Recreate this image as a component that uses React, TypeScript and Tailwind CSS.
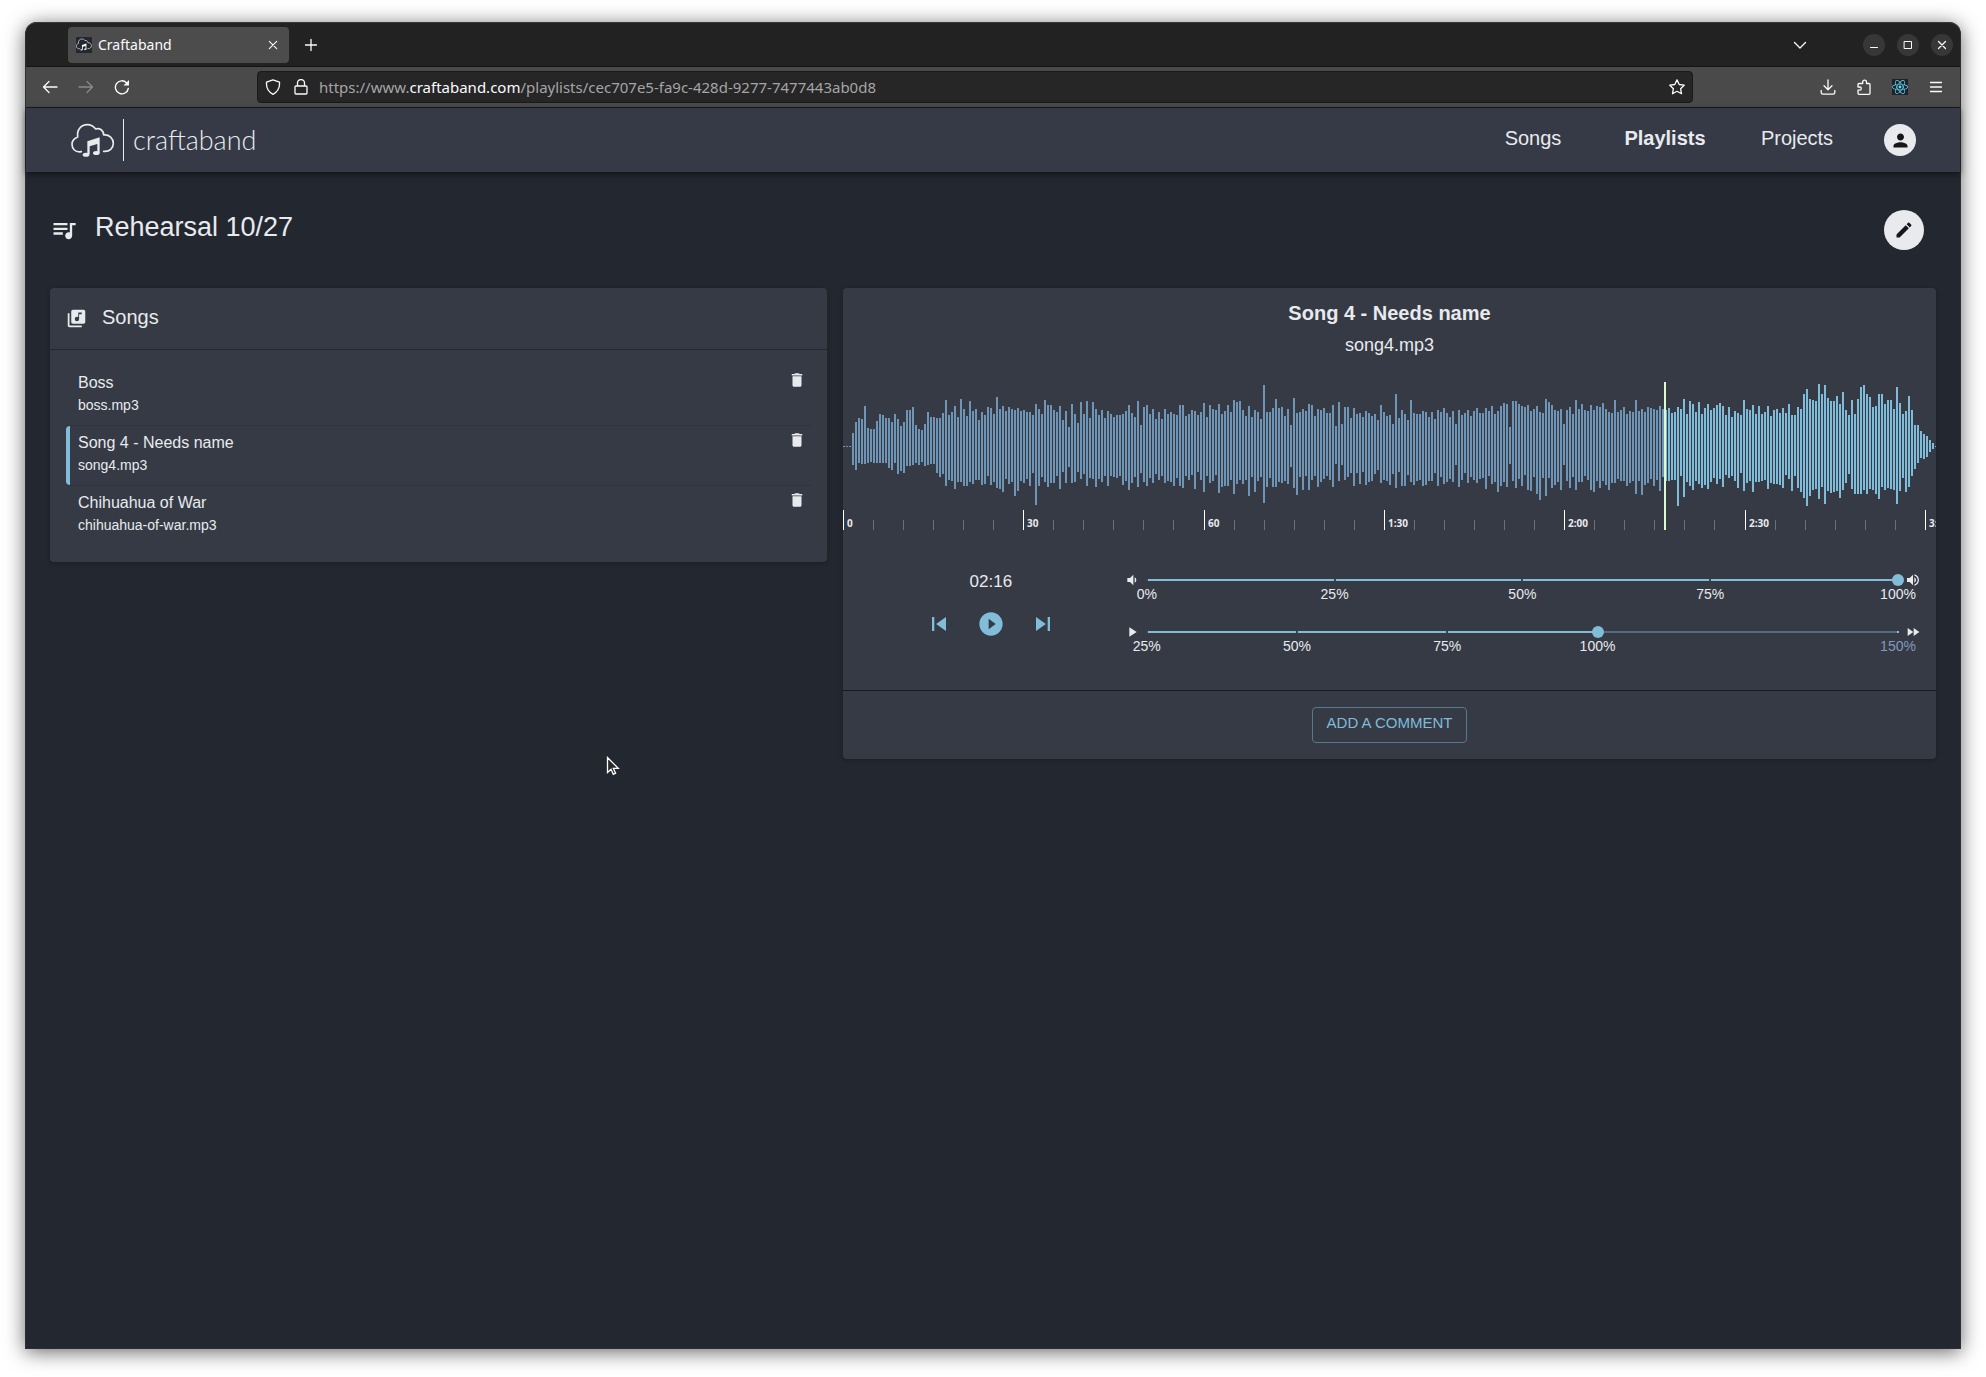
import { FC, ReactNode, useState } from "react";
import { FaReact } from "react-icons/fa";
import {
  MdDelete,
  MdEdit,
  MdFastForward,
  MdLibraryMusic,
  MdPerson,
  MdPlayArrow,
  MdPlayCircleFilled,
  MdQueueMusic,
  MdSkipNext,
  MdSkipPrevious,
  MdVolumeDown,
  MdVolumeUp,
} from "react-icons/md";

// peak heights above and below the centre line, one pair per bar
const PEAKS_UP = [
  0, 0, 0, 13, 24, 28, 27, 40, 18, 17, 17, 25, 32, 31, 28, 28, 24, 32, 27, 20,
  24, 36, 36, 39, 21, 17, 16, 22, 34, 29, 29, 28, 28, 33, 46, 31, 34, 40, 29,
  47, 37, 30, 45, 35, 37, 26, 34, 31, 39, 38, 32, 49, 37, 40, 35, 39, 37, 36,
  38, 35, 36, 34, 34, 31, 42, 37, 32, 46, 41, 41, 36, 34, 40, 26, 35, 19, 42,
  32, 23, 44, 32, 45, 28, 44, 37, 31, 36, 28, 35, 32, 29, 31, 31, 32, 35, 41,
  33, 29, 45, 21, 39, 41, 32, 37, 27, 34, 27, 37, 32, 34, 32, 31, 41, 41, 30,
  32, 36, 35, 31, 34, 43, 29, 41, 37, 36, 42, 32, 35, 41, 34, 46, 44, 45, 36,
  30, 40, 29, 36, 34, 27, 61, 34, 34, 38, 47, 38, 39, 30, 37, 21, 48, 33, 34,
  37, 35, 42, 41, 30, 37, 36, 38, 33, 33, 41, 20, 44, 22, 39, 39, 28, 38, 32,
  33, 29, 35, 33, 30, 32, 26, 41, 34, 30, 31, 22, 52, 28, 36, 32, 26, 46, 33,
  32, 32, 35, 34, 29, 34, 27, 36, 34, 38, 33, 29, 35, 22, 36, 31, 33, 36, 30,
  35, 38, 33, 33, 38, 35, 40, 32, 35, 40, 43, 42, 19, 45, 45, 42, 40, 39, 41,
  35, 37, 40, 34, 33, 47, 44, 41, 36, 35, 37, 22, 36, 39, 32, 46, 37, 42, 36,
  35, 41, 36, 40, 39, 43, 37, 34, 33, 46, 34, 36, 39, 32, 35, 34, 46, 35, 37,
  34, 39, 38, 37, 36, 40, 37, 36, 38, 33, 34, 39, 37, 47, 32, 45, 42, 34, 44,
  32, 38, 42, 36, 38, 41, 43, 40, 31, 39, 29, 35, 33, 31, 46, 37, 36, 41, 32,
  40, 32, 34, 40, 30, 36, 37, 33, 38, 33, 42, 31, 31, 39, 37, 52, 57, 47, 46,
  45, 62, 52, 61, 48, 45, 45, 50, 42, 54, 36, 31, 46, 32, 47, 59, 61, 52, 49,
  39, 40, 52, 52, 42, 46, 46, 37, 59, 43, 32, 35, 50, 36, 21, 21, 15, 12, 10,
  6, 3, 0,
];

const PEAKS_DOWN = [
  0, 0, 0, 18, 23, 16, 17, 17, 16, 15, 16, 16, 16, 16, 16, 21, 23, 16, 27, 24,
  26, 19, 19, 18, 16, 18, 15, 19, 18, 17, 17, 26, 30, 27, 39, 33, 34, 42, 35,
  35, 39, 39, 35, 37, 33, 33, 38, 37, 29, 38, 35, 41, 42, 45, 32, 37, 35, 49,
  44, 34, 36, 32, 39, 26, 58, 39, 30, 35, 40, 36, 36, 29, 42, 25, 36, 20, 36,
  35, 25, 32, 27, 39, 31, 32, 40, 32, 35, 29, 39, 29, 30, 31, 29, 38, 34, 43,
  36, 30, 40, 26, 35, 39, 31, 36, 27, 33, 29, 36, 34, 35, 39, 31, 39, 41, 29,
  33, 28, 42, 25, 33, 45, 29, 36, 34, 28, 46, 40, 39, 39, 33, 47, 37, 33, 37,
  33, 49, 30, 45, 34, 30, 56, 40, 31, 40, 40, 35, 36, 34, 37, 20, 41, 48, 30,
  43, 29, 43, 33, 29, 40, 35, 32, 29, 33, 40, 17, 34, 18, 33, 30, 26, 39, 26,
  37, 25, 38, 35, 34, 27, 23, 36, 33, 34, 38, 27, 41, 25, 39, 39, 28, 35, 38,
  34, 33, 39, 38, 34, 34, 26, 39, 30, 37, 35, 32, 35, 18, 40, 33, 26, 36, 30,
  33, 36, 32, 31, 42, 29, 37, 35, 45, 39, 35, 40, 17, 34, 41, 32, 39, 28, 43,
  44, 30, 47, 53, 31, 49, 31, 41, 38, 35, 43, 18, 34, 41, 30, 43, 35, 35, 29,
  33, 43, 45, 34, 41, 34, 38, 43, 36, 36, 32, 34, 34, 39, 36, 34, 47, 34, 48,
  38, 36, 32, 39, 33, 44, 30, 34, 34, 33, 33, 59, 29, 50, 35, 39, 43, 34, 37,
  41, 38, 42, 35, 31, 37, 32, 40, 28, 31, 29, 34, 41, 26, 44, 36, 34, 45, 35,
  35, 34, 33, 42, 36, 37, 37, 38, 41, 28, 32, 44, 29, 41, 45, 51, 59, 49, 43,
  42, 52, 40, 57, 44, 46, 45, 44, 51, 43, 36, 27, 42, 47, 47, 47, 43, 47, 42,
  43, 47, 52, 40, 43, 41, 42, 43, 57, 44, 31, 45, 40, 29, 22, 16, 11, 12, 10,
  5, 2, 0,
];

const MID = 64;
const PLAYHEAD = 821;
const TICKS = ["0", "30", "60", "1:30", "2:00", "2:30", "3:00"];

const bars = (from: number, to: number) =>
  PEAKS_UP.slice(from, to)
    .map((up, i) => {
      const n = from + i;
      return `M${n * 3} ${MID - up}h2v${up + 1 + (PEAKS_DOWN[n] ?? 0)}h-2z`;
    })
    .join("");

const songs = [
  { name: "Boss", file: "boss.mp3" },
  { name: "Song 4 - Needs name", file: "song4.mp3" },
  { name: "Chihuahua of War", file: "chihuahua-of-war.mp3" },
];

interface LogoMarkProps {
  className: string;
}

const LogoMark: FC<LogoMarkProps> = ({ className }) => (
  <svg viewBox="0 0 132 108" className={className} fill="none">
    <path
      d="M31 89C12 92 3 80 3 67C3 55 10 49 20 45C17 22 31 8 49 8C60 8 68 13 74 21C86 17 98 25 98 39C115 37 127 50 127 64C127 79 116 90 98 88"
      stroke="currentColor"
      strokeWidth="5"
      strokeLinecap="round"
      strokeLinejoin="round"
    />
    <path d="M49 58L86 46V92H79V66L56 73V97H49Z" fill="currentColor" />
    <ellipse cx="45" cy="98" rx="10" ry="6" fill="currentColor" />
    <ellipse cx="76" cy="93" rx="10" ry="6" fill="currentColor" />
  </svg>
);

interface ChromeButtonProps {
  label: string;
  dim?: boolean;
  children: ReactNode;
}

const ChromeButton: FC<ChromeButtonProps> = ({ label, dim, children }) => (
  <button
    aria-label={label}
    className={`flex h-8 w-9 items-center justify-center ${dim ? "text-[#8a8a8a]" : "text-[#fbfbfe]"}`}
  >
    {children}
  </button>
);

interface GlyphProps {
  d: string;
  width?: number;
}

const Glyph: FC<GlyphProps> = ({ d, width = 1.3 }) => (
  <svg
    viewBox="0 0 16 16"
    className="size-4 shrink-0"
    fill="none"
    stroke="currentColor"
    strokeWidth={width}
    strokeLinecap="round"
    strokeLinejoin="round"
  >
    <path d={d} />
  </svg>
);

const TabBar: FC = () => (
  <div className="flex h-[45px] items-center rounded-t-[11px] border-t border-b border-t-[#3a3a3a] border-b-[#151515] bg-[#222222] pr-[7px] pl-[42px] text-[#fbfbfe]">
    <div className="flex h-9 w-[221px] items-center gap-[6px] rounded-[4px] bg-[#4c4c4c] px-2">
      <span className="flex size-4 items-center justify-center bg-[#23272f]">
        <LogoMark className="w-4" />
      </span>
      <span className="flex-1 font-['Noto_Sans',sans-serif] text-[14px]">
        Craftaband
      </span>
      <button aria-label="Close tab">
        <Glyph d="M4.3 4.3l7.4 7.4M11.7 4.3l-7.4 7.4" width={1.1} />
      </button>
    </div>
    <button aria-label="New tab" className="ml-[14px]">
      <Glyph d="M8 2.5v11M2.5 8h11" />
    </button>
    <div className="flex-1" />
    <button aria-label="List all tabs" className="mr-[55px]">
      <Glyph d="M2.5 5.500l5.500 5.500l5.500-5.500" />
    </button>
    <div className="flex gap-3">
      <button
        aria-label="Minimize"
        className="flex size-[22px] items-center justify-center rounded-full bg-[#373737]"
      >
        <Glyph d="M4.500 10.500h7" width={1} />
      </button>
      <button
        aria-label="Maximize"
        className="flex size-[22px] items-center justify-center rounded-full bg-[#373737]"
      >
        <Glyph d="M4.500 4.500h7v7h-7z" width={1} />
      </button>
      <button
        aria-label="Close window"
        className="flex size-[22px] items-center justify-center rounded-full bg-[#373737]"
      >
        <Glyph d="M4.500 4.500l7 7M11.500 4.500l-7 7" width={1.2} />
      </button>
    </div>
  </div>
);

const Toolbar: FC = () => (
  <div className="flex h-[41px] items-center border-b border-[#1b1b1b] bg-[#4a4a4a] px-[6px]">
    <ChromeButton label="Back">
      <Glyph d="M15 8H1.500M7 2.500L1.500 8L7 13.500" />
    </ChromeButton>
    <ChromeButton label="Forward" dim>
      <Glyph d="M1 8h13.500M9 2.500L14.500 8L9 13.500" />
    </ChromeButton>
    <ChromeButton label="Reload">
      <svg viewBox="0 0 16 16" className="size-4" fill="none">
        <path
          d="M14.300 9.500A6.500 6.500 0 1 1 12.500 3.700"
          stroke="currentColor"
          strokeWidth="1.4"
          strokeLinecap="round"
        />
        <path d="M15 1v5.500h-5.500z" fill="currentColor" />
      </svg>
    </ChromeButton>
    <div className="mx-[117px] flex h-8 flex-1 items-center rounded-[4px] border border-[#1a1a1a] bg-[#262626] px-[7px] text-[#fbfbfe]">
      <Glyph d="M8 .8L14.500 3.200C14.900 8.500 12.500 13 8 15.300C3.500 13 1.100 8.500 1.500 3.200Z" />
      <span className="ml-3 flex">
        <Glyph d="M3 7h10a1 1 0 0 1 1 1v6a1 1 0 0 1-1 1H3a1 1 0 0 1-1-1V8a1 1 0 0 1 1-1zM4.500 7V4a3.500 3.500 0 0 1 7 0V7" />
      </span>
      <span className="ml-[10px] flex-1 font-['Noto_Sans',sans-serif] text-[15px] text-[#a5a5a8]">
        https://www.<span className="text-[#fbfbfe]">craftaband.com</span>
        /playlists/cec707e5-fa9c-428d-9277-7477443ab0d8
      </span>
      <button aria-label="Bookmark this page">
        <Glyph d="M8 .9l2.200 4.600l5 .7l-3.600 3.500l.9 5L8 12.300l-4.500 2.400l.9-5L.8 6.200l5-.7z" />
      </button>
    </div>
    <ChromeButton label="Downloads">
      <Glyph d="M8 .8v9.700M4 6.700l4 4l4-4M1.200 11.500v2a1.700 1.700 0 0 0 1.700 1.700h10.200a1.700 1.700 0 0 0 1.700-1.700v-2" />
    </ChromeButton>
    <ChromeButton label="Extensions">
      <Glyph d="M3 15.300h10a1 1 0 0 0 1-1V5.500a1 1 0 0 0-1-1h-2.500V3a1.900 1.900 0 0 0-3.800 0v1.500H3a1 1 0 0 0-1 1V8h1.700a1.500 1.500 0 0 1 0 3.200H2v3.100a1 1 0 0 0 1 1z" />
    </ChromeButton>
    <ChromeButton label="React Developer Tools">
      <span className="flex size-4 items-center justify-center bg-[#1f2228] text-[#61dafb]">
        <FaReact size={16} />
      </span>
    </ChromeButton>
    <ChromeButton label="Open application menu">
      <Glyph d="M2.500 3.500h11M2.500 8h11M2.500 12.500h11" />
    </ChromeButton>
  </div>
);

const Header: FC = () => (
  <header className="relative flex h-16 items-center bg-[#353a46] pr-11 pl-[45px] shadow-[0_2px_6px_rgba(0,0,0,0.55)]">
    <a href="#home" className="flex items-center text-[#e8eaee]">
      <LogoMark className="w-11" />
      <span className="ml-2 h-[42px] w-px bg-[#e8eaee]" />
      <span className="ml-[9px] font-['Lato',sans-serif] text-[27px] leading-8 font-light">
        craftaband
      </span>
    </a>
    <nav className="ml-auto grid grid-cols-3 pb-1 text-center text-[20px] leading-7">
      <a href="#songs" className="w-[132px]">
        Songs
      </a>
      <a href="#playlists" className="w-[132px] font-bold">
        Playlists
      </a>
      <a href="#projects" className="w-[132px]">
        Projects
      </a>
    </nav>
    <button
      aria-label="Account"
      className="ml-[21px] flex size-8 items-center justify-center rounded-full bg-[#e8eaee] text-[#15171b]"
    >
      <MdPerson size={21} />
    </button>
  </header>
);

const SongList: FC = () => (
  <section className="rounded-[4px] bg-[#353a45] shadow-[0_1px_4px_rgba(0,0,0,0.25)]">
    <div className="flex h-[62px] items-center gap-[15px] border-b border-[#23272f] px-4">
      <MdLibraryMusic size={21} />
      <h2 className="pb-1 text-[20px] leading-7">Songs</h2>
    </div>
    <ul className="p-4">
      {songs.map((song, i) => (
        <li
          key={song.file}
          className={`relative flex h-[60px] justify-between pt-[5px] pr-[5px] pl-3 ${i < 2 ? "border-b border-[#30343f]" : ""}`}
        >
          {i === 1 && (
            <span className="absolute inset-y-0 left-0 w-1 rounded-l-[4px] bg-[#81bcd8]" />
          )}
          <div>
            <p className="text-[16px] leading-6">{song.name}</p>
            <p className="text-[14px] leading-5">{song.file}</p>
          </div>
          <button
            aria-label={`Delete ${song.name}`}
            className="h-[18px] self-start"
          >
            <MdDelete size={18} />
          </button>
        </li>
      ))}
    </ul>
  </section>
);

const Waveform: FC = () => (
  <svg className="block h-[148px] w-full overflow-hidden">
    <path d={bars(0, 274)} fill="#6e95b5" shapeRendering="crispEdges" />
    <path d={bars(274, 365)} fill="#7fbcd9" shapeRendering="crispEdges" />
    {TICKS.map((label, i) => {
      const x = Math.round(i * 180.3);
      return (
        <g key={label}>
          <rect x={x} y="128" width="1" height="20" fill="#ffffff" />
          {[1, 2, 3, 4, 5].map((n) => (
            <rect
              key={n}
              x={x + n * 30}
              y="138"
              width="1"
              height="10"
              fill="#6b6f78"
            />
          ))}
          <text
            x={x + 4}
            y="145"
            fill="#e8eaee"
            className="font-['Open_Sans',sans-serif] text-[10px] font-bold"
          >
            {label}
          </text>
        </g>
      );
    })}
    <rect x={PLAYHEAD} y="0" width="2" height="148" fill="#dcfad2" />
  </svg>
);

interface MarkedSliderProps {
  label: string;
  min: number;
  max: number;
  initial: number;
  marks: number[];
  before: ReactNode;
  after: ReactNode;
}

const MarkedSlider: FC<MarkedSliderProps> = ({
  label,
  min,
  max,
  initial,
  marks,
  before,
  after,
}) => {
  const [value, setValue] = useState(initial);
  const pct = (n: number) => `${((n - min) / (max - min)) * 100}%`;

  return (
    <div className="flex h-[52px] items-start gap-[7px]">
      {before}
      <div className="relative flex h-4 flex-1 items-center">
        <div className="h-[2px] w-full bg-[#526d80]">
          <div className="h-full bg-[#81bcd8]" style={{ width: pct(value) }} />
        </div>
        {marks.map((mark) => (
          <span
            key={mark}
            className={`absolute h-[2px] w-[2px] -translate-x-1/2 ${mark > value ? "bg-[#81bcd8]" : "bg-[#3d4653]"}`}
            style={{ left: pct(mark) }}
          />
        ))}
        {marks.map((mark) => (
          <span
            key={mark}
            className={`absolute top-3 -translate-x-1/2 text-[14px] leading-5 ${mark > value ? "text-[#8698bd]" : ""}`}
            style={{ left: pct(mark) }}
          >
            {mark}%
          </span>
        ))}
        <input
          type="range"
          aria-label={label}
          min={min}
          max={max}
          value={value}
          onChange={(e) => setValue(Number(e.target.value))}
          className="absolute inset-y-0 -left-[6px] m-0 w-[calc(100%+12px)] cursor-pointer appearance-none bg-transparent [&::-webkit-slider-thumb]:size-3 [&::-webkit-slider-thumb]:appearance-none [&::-webkit-slider-thumb]:rounded-full [&::-webkit-slider-thumb]:bg-[#81bcd8]"
        />
      </div>
      {after}
    </div>
  );
};

const Player: FC = () => (
  <section className="overflow-hidden rounded-[4px] bg-[#353a45] shadow-[0_1px_4px_rgba(0,0,0,0.25)]">
    <div className="flex h-[94px] flex-col gap-1 pt-[11px] text-center">
      <h2 className="text-[20px] leading-7 font-bold">Song 4 - Needs name</h2>
      <p className="text-[18px] leading-7">song4.mp3</p>
    </div>
    <Waveform />
    <div className="grid grid-cols-4 px-[15px] pt-10 pb-[14px]">
      <div className="flex flex-col items-center gap-4">
        <p className="text-[17px] leading-6">02:16</p>
        <div className="flex gap-6 text-[#81bcd8]">
          <button aria-label="Previous song">
            <MdSkipPrevious size={28} />
          </button>
          <button aria-label="Play">
            <MdPlayCircleFilled size={28} />
          </button>
          <button aria-label="Next song">
            <MdSkipNext size={28} />
          </button>
        </div>
      </div>
      <div className="col-span-3 pt-[2px]">
        <MarkedSlider
          label="Volume"
          min={0}
          max={100}
          initial={100}
          marks={[0, 25, 50, 75, 100]}
          before={<MdVolumeDown size={16} />}
          after={<MdVolumeUp size={16} />}
        />
        <MarkedSlider
          label="Playback speed"
          min={25}
          max={150}
          initial={100}
          marks={[25, 50, 75, 100, 150]}
          before={<MdPlayArrow size={16} />}
          after={<MdFastForward size={16} />}
        />
      </div>
    </div>
    <div className="flex h-[69px] items-center justify-center border-t border-[#191b20]">
      <button className="h-9 rounded-[4px] border border-[#56798d] px-[14px] pb-1 text-[15px] leading-6 text-[#7fbcd9]">
        ADD A COMMENT
      </button>
    </div>
  </section>
);

const Pointer: FC = () => (
  <svg
    viewBox="0 0 14 20"
    className="pointer-events-none absolute top-[734px] left-[580px] h-5 w-[14px]"
  >
    <path
      d="M1.500 1.500V16.500L5 13.300L7.300 18.300L9.600 17.200L7.400 12.400H12.300Z"
      fill="#2a2a2a"
      stroke="#ffffff"
      strokeWidth="1.3"
    />
  </svg>
);

const App: FC = () => {
  return (
    <div className="flex min-h-screen bg-white px-[25px] pt-[22px] pb-7 font-['Liberation_Sans',Arial,sans-serif] text-[#e8eaee]">
      <div className="relative flex flex-1 flex-col rounded-t-[12px] border-x border-b border-[#2e2f32] bg-[#23272f] shadow-[0_3px_20px_rgba(0,0,0,0.6)]">
        <TabBar />
        <Toolbar />
        <Header />
        <main className="px-6 pt-[38px]">
          <div className="mb-[38px] flex items-center gap-[17px]">
            <MdQueueMusic size={28} />
            <h1 className="flex-1 pb-[6px] text-[27px] leading-8">
              Rehearsal 10/27
            </h1>
            <button
              aria-label="Edit playlist"
              className="mr-3 flex size-10 items-center justify-center rounded-full bg-[#e8eaee] text-[#15171b]"
            >
              <MdEdit size={20} />
            </button>
          </div>
          <div className="grid grid-cols-[777fr_1093fr] items-start gap-4">
            <SongList />
            <Player />
          </div>
        </main>
        <Pointer />
      </div>
    </div>
  );
};

export default App;
